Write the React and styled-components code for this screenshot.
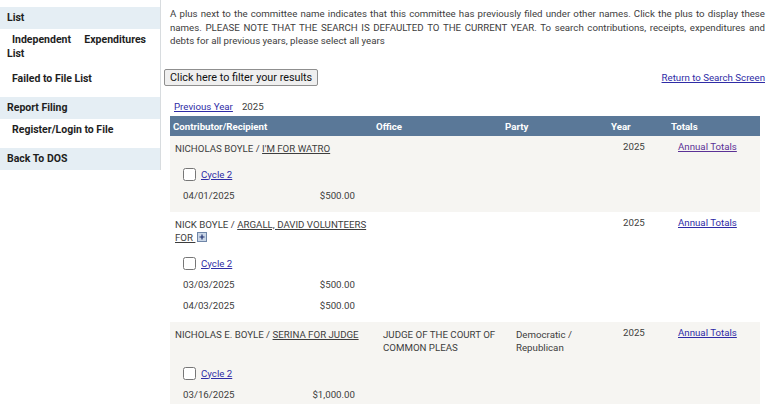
import React from 'react';
import styled, { createGlobalStyle } from 'styled-components';

const GlobalStyle = createGlobalStyle`
  html, body {
    margin: 0;
    padding: 0;
    background: #fff;
  }
  body {
    font-family: Roboto, "Liberation Sans", Arial, sans-serif;
    color: #3d3d3d;
  }
`;

const Page = styled.div`
  display: flex;
  align-items: flex-start;
  width: 768px;
  height: 404px;
  overflow: hidden;
`;

const Sidebar = styled.nav`
  border-right: 1px solid #d8dcdf;
  flex-shrink: 0;
  padding: 7px 0 0;
  width: 160px;
`;

const SideHeader = styled.div`
  background: #e5eef4;
  color: #1e1e1e;
  font-size: 10.5px;
  font-weight: 700;
  height: 22px;
  line-height: 22px;
  padding-left: 7px;
`;

const SideGroup = styled.div`
  padding: 0 0 4px;
`;

const SideItem = styled.a`
  color: #1e1e1e;
  display: block;
  font-size: 10.5px;
  font-weight: 700;
  line-height: 14px;
  padding: 4px 14px 7px 7px;
  text-align: justify;
  text-decoration: none;
  text-indent: 5px;
`;

const Main = styled.main`
  flex: 1;
  min-width: 0;
  padding: 7px 3px 0 3px;
`;

const Notice = styled.p`
  font-size: 9.7px;
  line-height: 13.7px;
  margin: 0 0 21px;
  padding-left: 6px;
  text-align: justify;
`;

const Toolbar = styled.div`
  align-items: center;
  display: flex;
  justify-content: space-between;
`;

const FilterButton = styled.button`
  background: #efefef;
  border: 1px solid #8f8f8f;
  border-radius: 2px;
  color: #111;
  font-family: Roboto, "Liberation Sans", Arial, sans-serif;
  font-size: 10.8px;
  height: 17px;
  line-height: 15px;
  padding: 0 5px;
`;

const Link = styled.a`
  color: ${({ $visited }) => ($visited ? '#5b3196' : '#2f2ca6')};
  cursor: pointer;
  font-size: 9.7px;
  text-decoration: underline;
`;

const NameLink = styled.a`
  color: inherit;
  text-decoration: underline;
`;

const YearNav = styled.div`
  display: flex;
  font-size: 9.7px;
  gap: 9px;
  line-height: 14px;
  margin: 14px 0 2px 10px;
`;

const Table = styled.table`
  border-collapse: collapse;
  font-size: 9.7px;
  margin-left: 6px;
  table-layout: fixed;
  width: 590px;
`;

const HeadCell = styled.th`
  background: #5a7898;
  color: #fff;
  font-size: 9.7px;
  font-weight: 700;
  height: 20px;
  padding: 0 0 0 3px;
  text-align: left;
`;

const Row = styled.tr`
  background: ${({ $shaded }) => ($shaded ? '#f6f5f2' : '#fff')};
`;

const Cell = styled.td`
  line-height: 13.5px;
  padding: ${({ $top = 5 }) => $top}px 3px 0 ${({ $left = 5 }) => $left}px;
  vertical-align: top;
`;

const DetailCell = styled.td`
  padding: 8px 0 6px 13px;
`;

const PlusBox = styled.svg`
  margin-left: 2px;
  vertical-align: -1px;
`;

const CycleRow = styled.div`
  align-items: center;
  display: flex;
  gap: 5px;
  height: 21px;
`;

const Check = styled.input`
  height: 13px;
  margin: 0;
  width: 13px;
`;

const Entry = styled.div`
  display: grid;
  grid-template-columns: 1fr auto;
  height: 21px;
  line-height: 21px;
  width: 172px;
`;

const rows = [
  {
    contributor: 'NICHOLAS BOYLE',
    recipient: "I'M FOR WATRO",
    office: '',
    party: '',
    visited: true,
    entries: [['04/01/2025', '$500.00']],
  },
  {
    contributor: 'NICK BOYLE',
    recipient: 'ARGALL, DAVID VOLUNTEERS FOR',
    office: '',
    party: '',
    plus: true,
    entries: [
      ['03/03/2025', '$500.00'],
      ['04/03/2025', '$500.00'],
    ],
  },
  {
    contributor: 'NICHOLAS E. BOYLE',
    recipient: 'SERINA FOR JUDGE',
    office: 'JUDGE OF THE COURT OF COMMON PLEAS',
    party: 'Democratic / Republican',
    entries: [['03/16/2025', '$1,000.00']],
  },
];

const Plus = () => (
  <PlusBox width="10" height="10" viewBox="0 0 10 10">
    <rect x="0.5" y="0.5" width="9" height="9" fill="#c9d6e6" stroke="#6f86a8" />
    <path d="M5 2.5v5M2.5 5h5" stroke="#1f2f6e" strokeWidth="1.2" />
  </PlusBox>
);

export default function App() {
  return (
    <Page>
      <GlobalStyle />
      <Sidebar>
        <SideHeader>List</SideHeader>
        <SideGroup>
          <SideItem>Independent Expenditures List</SideItem>
          <SideItem>Failed to File List</SideItem>
        </SideGroup>
        <SideHeader>Report Filing</SideHeader>
        <SideGroup>
          <SideItem>Register/Login to File</SideItem>
        </SideGroup>
        <SideHeader>Back To DOS</SideHeader>
      </Sidebar>

      <Main>
        <Notice>
          A plus next to the committee name indicates that this committee has previously filed under other
          names. Click the plus to display these names. PLEASE NOTE THAT THE SEARCH IS DEFAULTED TO THE
          CURRENT YEAR. To search contributions, receipts, expenditures and debts for all previous years,
          please select all years
        </Notice>

        <Toolbar>
          <FilterButton>Click here to filter your results</FilterButton>
          <Link>Return to Search Screen</Link>
        </Toolbar>

        <YearNav>
          <Link>Previous Year </Link>
          <span>2025</span>
        </YearNav>

        <Table>
          <colgroup>
            <col style={{ width: 203 }} />
            <col style={{ width: 129 }} />
            <col style={{ width: 106 }} />
            <col style={{ width: 60 }} />
            <col style={{ width: 92 }} />
          </colgroup>
          <thead>
            <tr>
              <HeadCell>Contributor/Recipient</HeadCell>
              <HeadCell>Office</HeadCell>
              <HeadCell>Party</HeadCell>
              <HeadCell>Year</HeadCell>
              <HeadCell>Totals</HeadCell>
            </tr>
          </thead>
          {rows.map((row, i) => (
            <tbody key={row.recipient}>
              <Row $shaded={i % 2 === 0}>
                <Cell $top={6}>
                  {row.contributor} /{' '}
                  <NameLink>
                    {row.recipient}
                    {row.plus ? '\u00a0' : ''}
                  </NameLink>
                  {row.plus && <Plus />}
                </Cell>
                <Cell $top={6} $left={10}>{row.office}</Cell>
                <Cell $top={6} $left={14}>{row.party}</Cell>
                <Cell $top={4} $left={15}>2025</Cell>
                <Cell $top={4} $left={10}>
                  <Link $visited={row.visited}>Annual Totals</Link>
                </Cell>
              </Row>
              <Row $shaded={i % 2 === 0}>
                <DetailCell colSpan={5}>
                  <CycleRow>
                    <Check type="checkbox" />
                    <Link>Cycle 2</Link>
                  </CycleRow>
                  {row.entries.map(([date, amount]) => (
                    <Entry key={date}>
                      <span>{date}</span>
                      <span>{amount}</span>
                    </Entry>
                  ))}
                </DetailCell>
              </Row>
            </tbody>
          ))}
        </Table>
      </Main>
    </Page>
  );
}
